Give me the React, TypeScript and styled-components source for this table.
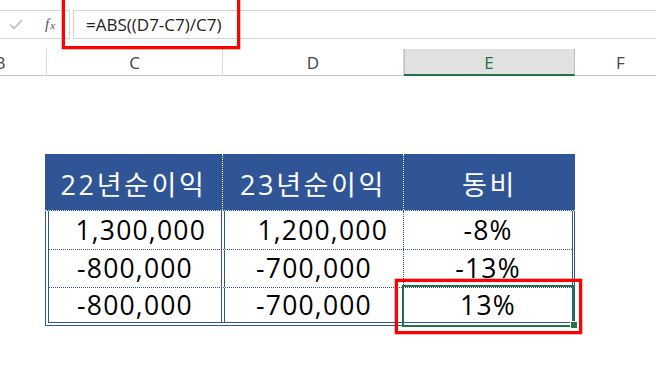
import React from "react";
import styled, { createGlobalStyle, css } from "styled-components";

const GlobalStyle = createGlobalStyle`
  html, body { margin: 0; padding: 0; background: #ffffff; }
  body {
    width: 656px;
    height: 373px;
    overflow: hidden;
    font-family: "Open Sans", "Noto Sans CJK KR", sans-serif;
  }
`;

const BLUE = "#2F5597";
const GREEN = "#217346";
const LINE = "#d4d4d4";

const Page = styled.div`
  position: relative;
  width: 656px;
  height: 373px;
  overflow: hidden;
  background: #fff;
`;

const FormulaBar = styled.div`
  position: relative;
  display: flex;
  margin-top: 10px;
  height: 29px;
`;

const ToolBox = styled.div`
  box-sizing: border-box;
  width: 70px;
  height: 29px;
  display: flex;
  align-items: center;
  padding-left: 9px;
  border-top: 1px solid ${LINE};
  border-bottom: 1px solid ${LINE};
  border-right: 1px solid ${LINE};
`;

const CheckIcon = styled.svg`
  width: 14px;
  height: 11px;
  display: block;
`;

const Fx = styled.span`
  margin-left: 22px;
  font-family: "Liberation Serif", "DejaVu Serif", serif;
  font-style: italic;
  color: #555;
  font-size: 15px;
  line-height: 1;
  display: flex;
  align-items: baseline;
  & > small {
    font-size: 11px;
    margin-left: 1px;
  }
`;

const FormulaBox = styled.div`
  box-sizing: border-box;
  flex: 1;
  height: 29px;
  margin-left: 3px;
  border-top: 1px solid ${LINE};
  border-bottom: 1px solid ${LINE};
  border-left: 1px solid ${LINE};
  padding-left: 12px;
  font-size: 17px;
  line-height: 28px;
  color: #1e1e1e;
  font-family: "Open Sans", sans-serif;
`;

const RedMark = styled.div`
  position: absolute;
  box-sizing: border-box;
  border: 3px solid #ff0000;
  box-shadow: 0 0 0 0.6px rgba(255, 0, 0, 0.45);
  pointer-events: none;
  z-index: 5;
`;

const FormulaMark = styled(RedMark)`
  left: 62px;
  top: -15px;
  width: 178px;
  height: 54px;
`;

const ColHeaderRow = styled.div`
  display: flex;
  margin-top: 10px;
  margin-left: -46px;
  height: 27px;
`;

const ColHead = styled.div<{ $w: number; $active?: boolean }>`
  box-sizing: border-box;
  flex: 0 0 ${(p) => p.$w}px;
  height: 27px;
  border-bottom: 1px solid #c6c6c6;
  border-right: 1px solid #d8d8d8;
  display: flex;
  align-items: center;
  justify-content: center;
  font-size: 17px;
  color: #444;
  padding-top: 1px;
  ${(p) =>
    p.$active &&
    css`
      background: #e1e1e1;
      border-bottom: 2px solid ${GREEN};
      border-right-color: #c0c0c0;
      box-shadow: inset 1px 0 0 #c0c0c0;
      color: ${GREEN};
    `}
`;

const Sheet = styled.div`
  padding-top: 78px;
  padding-left: 45px;
`;

const Table = styled.div`
  width: 530px;
`;

const THead = styled.div`
  box-sizing: border-box;
  display: grid;
  grid-template-columns: 178px 181px 171px;
  height: 57px;
  background: ${BLUE};
  border-bottom: 1px dotted #dfe6f3;
`;

const HeadCell = styled.div<{ $last?: boolean }>`
  display: flex;
  align-items: center;
  justify-content: center;
  padding-top: 5px;
  color: #ffffff;
  font-size: 27px;
  line-height: 1;
  letter-spacing: 2.6px;
  border-right: ${(p) => (p.$last ? "none" : "1px dotted #ffffff")};
`;

const TBody = styled.div`
  border-left: 4px double ${BLUE};
  border-right: 3px double ${BLUE};
  border-bottom: 4px double ${BLUE};
`;

const Row = styled.div<{ $h: number; $last?: boolean }>`
  box-sizing: border-box;
  display: grid;
  grid-template-columns: 176px 179px 168px;
  height: ${(p) => p.$h}px;
  border-bottom: ${(p) => (p.$last ? "none" : `1px dotted ${BLUE}`)};
`;

type Sep = "double" | "dotted" | "none";

const Cell = styled.div<{ $sep: Sep; $align: "center" | "right" }>`
  position: relative;
  box-sizing: border-box;
  display: flex;
  align-items: center;
  justify-content: ${(p) => (p.$align === "right" ? "flex-end" : "center")};
  padding-right: ${(p) => (p.$align === "right" ? 15 : 0)}px;
  font-size: 26.5px;
  line-height: 1;
  letter-spacing: 1.2px;
  color: #000;
  border-right: ${(p) =>
    p.$sep === "double"
      ? `4px double ${BLUE}`
      : p.$sep === "dotted"
      ? `1px dotted ${BLUE}`
      : "none"};
`;

const Selection = styled.div`
  position: absolute;
  top: -3px;
  left: -2px;
  right: -3px;
  bottom: -5px;
  border: 2px solid ${GREEN};
  z-index: 2;
  pointer-events: none;
`;

const FillHandle = styled.div`
  position: absolute;
  right: -6px;
  bottom: -7px;
  width: 6px;
  height: 6px;
  background: ${GREEN};
  border: 1px solid #ffffff;
  z-index: 3;
`;

const CellMark = styled(RedMark)`
  top: -9px;
  left: -9px;
  right: -10px;
  bottom: -12px;
`;

const rows = [
  { h: 39, c: "1,300,000", d: "1,200,000", e: "-8%", pos: true },
  { h: 38, c: "-800,000", d: "-700,000", e: "-13%", pos: false },
  { h: 34, c: "-800,000", d: "-700,000", e: "13%", pos: false, selected: true },
];

export default function App() {
  return (
    <Page>
      <GlobalStyle />
      <FormulaBar>
        <ToolBox>
          <CheckIcon viewBox="0 0 14 11">
            <polyline
              points="1,5.5 5,9.5 13,1"
              fill="none"
              stroke="#bdbdbd"
              strokeWidth="1.6"
            />
          </CheckIcon>
          <Fx>
            f<small>x</small>
          </Fx>
        </ToolBox>
        <FormulaBox>=ABS((D7-C7)/C7)</FormulaBox>
        <FormulaMark />
      </FormulaBar>

      <ColHeaderRow>
        <ColHead $w={93}>B</ColHead>
        <ColHead $w={176}>C</ColHead>
        <ColHead $w={181}>D</ColHead>
        <ColHead $w={171} $active>
          E
        </ColHead>
        <ColHead $w={92}>F</ColHead>
      </ColHeaderRow>

      <Sheet>
        <Table>
          <THead>
            <HeadCell>22년순이익</HeadCell>
            <HeadCell>23년순이익</HeadCell>
            <HeadCell $last>동비</HeadCell>
          </THead>
          <TBody>
            {rows.map((r, i) => (
              <Row key={i} $h={r.h} $last={i === rows.length - 1}>
                <Cell $sep="double" $align={r.pos ? "right" : "center"}>
                  {r.c}
                </Cell>
                <Cell $sep="dotted" $align={r.pos ? "right" : "center"}>
                  {r.d}
                </Cell>
                <Cell $sep="none" $align="center">
                  {r.e}
                  {r.selected && (
                    <>
                      <Selection />
                      <FillHandle />
                      <CellMark />
                    </>
                  )}
                </Cell>
              </Row>
            ))}
          </TBody>
        </Table>
      </Sheet>
    </Page>
  );
}
